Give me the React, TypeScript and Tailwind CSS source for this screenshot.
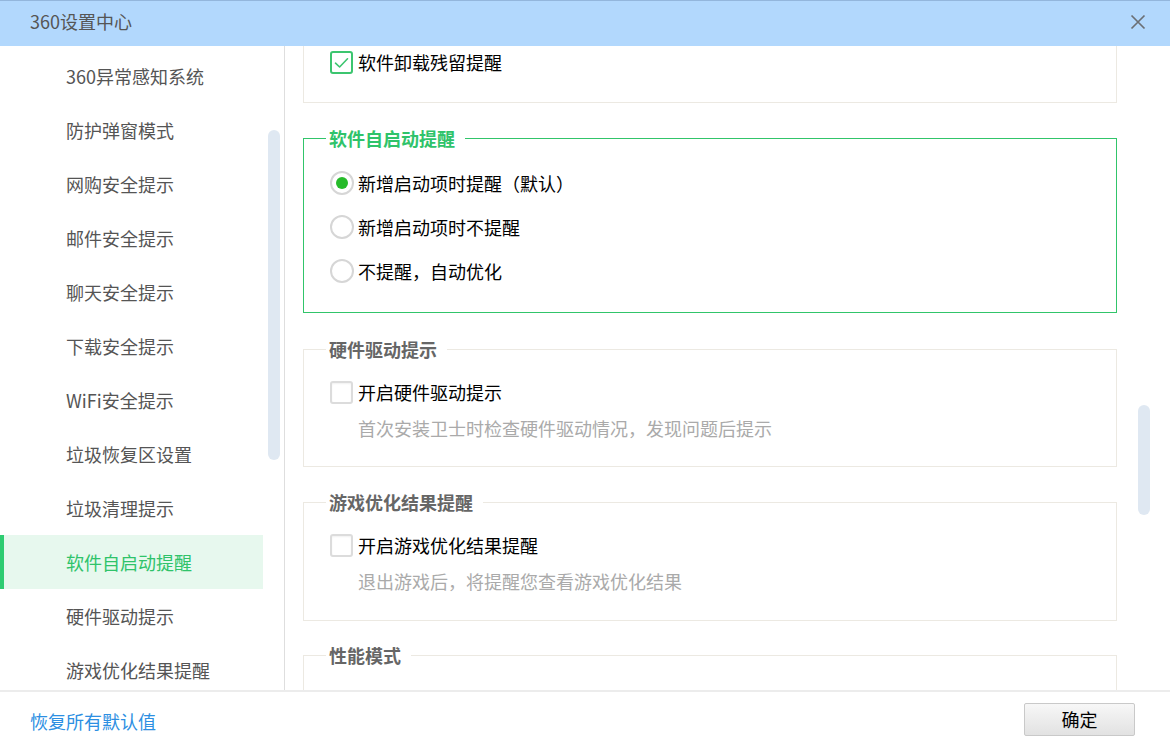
import React from "react";

const menu = [
  "360异常感知系统",
  "防护弹窗模式",
  "网购安全提示",
  "邮件安全提示",
  "聊天安全提示",
  "下载安全提示",
  "WiFi安全提示",
  "垃圾恢复区设置",
  "垃圾清理提示",
  "软件自启动提醒",
  "硬件驱动提示",
  "游戏优化结果提醒",
];

const ACTIVE = "软件自启动提醒";

function CheckBox({ checked }: { checked?: boolean }) {
  if (checked) {
    return (
      <span className="flex h-[23px] w-[23px] shrink-0 items-center justify-center rounded-[3px] border-2 border-[#3cc56f] bg-white">
        <svg width="15" height="12" viewBox="0 0 15 12" fill="none">
          <path d="M1.5 6.2 L5.6 10 L13.5 1.8" stroke="#3cc56f" strokeWidth="1.6" strokeLinecap="round" strokeLinejoin="round" />
        </svg>
      </span>
    );
  }
  return (
    <span className="h-[23px] w-[23px] shrink-0 rounded-[3px] border-2 border-[#dcdcdc] bg-white shadow-[inset_0_1px_2px_rgba(0,0,0,0.06)]" />
  );
}

function Radio({ checked }: { checked?: boolean }) {
  return (
    <span className="flex h-[24px] w-[24px] shrink-0 items-center justify-center rounded-full border-2 border-[#d6d6d6] bg-white">
      {checked && <span className="h-[12px] w-[12px] rounded-full bg-[#26bb2a]" />}
    </span>
  );
}

function Section({
  title,
  active,
  children,
  className = "",
}: {
  title: string;
  active?: boolean;
  children?: React.ReactNode;
  className?: string;
}) {
  return (
    <fieldset
      className={`border ${active ? "border-[#31c56a]" : "border-[#ece9e2]"} ${className}`}
    >
      <legend
        className={`ml-[22px] pl-[3px] pr-[10px] text-[18px] font-bold leading-[24px] ${
          active ? "text-[#2fc36a]" : "text-[#666]"
        }`}
      >
        {title}
      </legend>
      <div className="pl-[26px]">{children}</div>
    </fieldset>
  );
}

export default function App() {
  return (
    <div
      className="flex h-[750px] w-[1170px] flex-col overflow-hidden bg-white text-[18px]"
      style={{ fontFamily: '"Microsoft YaHei", "Noto Sans CJK SC", sans-serif' }}
    >
      <header className="flex h-[46px] shrink-0 items-center justify-between border-t border-[#93b6dc] bg-[#b2d8fd] pb-[5px] pl-[30px] pr-[24px]">
        <span className="text-[18px] text-[#555]">360设置中心</span>
        <svg width="16" height="16" viewBox="0 0 16 16" className="mt-[2px]">
          <path d="M1.5 1.5 L14.5 14.5 M14.5 1.5 L1.5 14.5" stroke="#6b6f75" strokeWidth="1.7" />
        </svg>
      </header>

      <div className="flex min-h-0 flex-1">
        <aside className="flex w-[285px] shrink-0 border-r border-[#dedede]">
          <nav className="flex w-[263px] flex-col pt-[3px]">
            {menu.map((item) => {
              const on = item === ACTIVE;
              return (
                <div
                  key={item}
                  className={`flex h-[54px] shrink-0 items-center border-l-4 pl-[62px] ${
                    on ? "border-[#2ecc71] bg-[#e7f8ee] text-[#2fc36a]" : "border-transparent text-[#555]"
                  }`}
                >
                  {item}
                </div>
              );
            })}
          </nav>
          <div className="flex flex-1 justify-center pt-[84px]">
            <div className="h-[330px] w-[12px] rounded-full bg-[#dfe8f2]" />
          </div>
        </aside>

        <main className="flex min-w-0 flex-1 overflow-hidden">
          <div className="flex w-[832px] shrink-0 flex-col pl-[18px]">
            <div className="border-x border-b border-[#ece9e2] pb-[23px] pl-[26px]">
              <label className="flex h-[33px] items-center gap-[5px] text-black">
                <CheckBox checked />
                软件卸载残留提醒
              </label>
            </div>

            <Section title="软件自启动提醒" active className="mt-[23px]">
              <div className="flex flex-col pt-[11px] pb-[19px]">
                {[
                  ["新增启动项时提醒（默认）", true],
                  ["新增启动项时不提醒", false],
                  ["不提醒，自动优化", false],
                ].map(([label, on]) => (
                  <label key={label as string} className="flex h-[44px] items-center gap-[4px] text-black">
                    <Radio checked={on as boolean} />
                    {label as string}
                  </label>
                ))}
              </div>
            </Section>

            <Section title="硬件驱动提示" className="mt-[24px]">
              <div className="flex flex-col pt-[13px] pb-[20px]">
                <label className="flex h-[36px] items-center gap-[5px] text-black">
                  <CheckBox />
                  开启硬件驱动提示
                </label>
                <p className="flex h-[36px] items-center pl-[28px] text-[#aaa]">首次安装卫士时检查硬件驱动情况，发现问题后提示</p>
              </div>
            </Section>

            <Section title="游戏优化结果提醒" className="mt-[23px]">
              <div className="flex flex-col pt-[13px] pb-[21px]">
                <label className="flex h-[36px] items-center gap-[5px] text-black">
                  <CheckBox />
                  开启游戏优化结果提醒
                </label>
                <p className="flex h-[36px] items-center pl-[28px] text-[#aaa]">退出游戏后，将提醒您查看游戏优化结果</p>
              </div>
            </Section>

            <Section title="性能模式" className="mt-[22px]">
              <div className="h-[80px]" />
            </Section>
          </div>
          <div className="flex flex-1 justify-center pl-[1px] pt-[359px]">
            <div className="h-[110px] w-[12px] rounded-full bg-[#dfe8f2]" />
          </div>
        </main>
      </div>

      <footer className="flex h-[60px] shrink-0 items-center justify-between border-t-2 border-[#ececec] pl-[30px] pr-[35px]">
        <span className="text-[#2d8fe2]">恢复所有默认值</span>
        <button className="mb-[3px] flex h-[33px] w-[111px] items-center justify-center rounded-[2px] border border-[#c9c9c9] bg-linear-to-b from-[#f7f7f7] to-[#e2e2e2] text-[18px] text-black">
          确定
        </button>
      </footer>
    </div>
  );
}
